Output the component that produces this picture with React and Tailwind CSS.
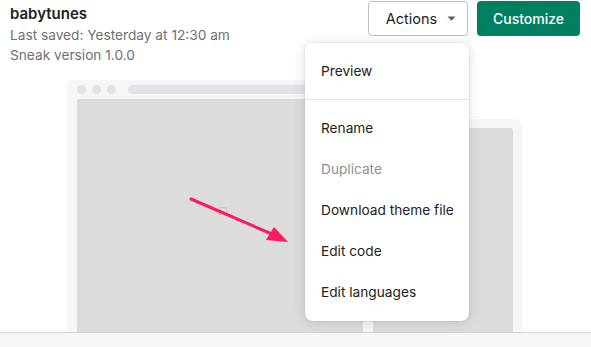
import React from "react";

function MenuItem({ children, muted }) {
  return (
    <div className={`h-[41px] flex items-center px-4 text-[13.7px] whitespace-nowrap ${muted ? "text-[#8c9196]" : "text-[#202223]"}`}>
      {children}
    </div>
  );
}

export default function App() {
  return (
    <div className="relative w-[591px] h-[347px] bg-white overflow-hidden flex flex-col font-['Inter',sans-serif]">

      {/* Header */}
      <div className="flex justify-between items-start pl-[10px] pr-[11px] pt-[1px] h-[80px]">
        <div className="pt-[3px]">
          <div className="text-[15px] leading-5 font-semibold text-[#202223]">babytunes</div>
          <div className="text-[13.7px] leading-5 text-[#6d7175] mt-[1px]">Last saved: Yesterday at 12:30 am</div>
          <div className="text-[13.7px] leading-5 text-[#6d7175]">Sneak version 1.0.0</div>
        </div>
        <div className="flex gap-[9px]">
          <button className="h-[35px] w-[100px] flex items-center justify-center gap-[10px] rounded-[4px] border border-[#babfc3] bg-white text-[14.5px] text-[#202223] pl-[6px]">
            Actions
            <svg width="9" height="5" viewBox="0 0 9 5"><path d="M0.5 0.5h8L4.5 4.8z" fill="#5c5f62" /></svg>
          </button>
          <button className="h-[35px] w-[103px] rounded-[4px] bg-[#008060] text-white text-[14px] font-medium">
            Customize
          </button>
        </div>
      </div>

      {/* Preview */}
      <div className="flex items-end pl-[67px] h-[252px]">
        <div className="w-[313px] h-full bg-[#f4f6f8] rounded-t-[6px] flex flex-col pt-[5px] pl-[10px]">
          <div className="flex items-center gap-[6px] h-[9px] mb-[5px]">
            <span className="w-[9px] h-[9px] rounded-full bg-[#dfe3e8]" />
            <span className="w-[9px] h-[9px] rounded-full bg-[#dfe3e8]" />
            <span className="w-[9px] h-[9px] rounded-full bg-[#dfe3e8]" />
            <span className="flex-1 h-[9px] rounded-full bg-[#dfe3e8] ml-[6px]" />
          </div>
          <div className="flex-1 bg-[#dcdcdc] flex items-center justify-center">
            <span className="w-[8px] h-[8px] border border-[#c8c8c8] mt-[-10px] ml-[-12px]" />
          </div>
        </div>
        <div className="w-[159px] h-[213px] -ml-[17px] bg-[#f4f6f8] rounded-t-[6px] pt-[9px] pl-[10px] pr-[9px] flex flex-col">
          <div className="flex-1 bg-[#dcdcdc] rounded-tr-[3px]" />
        </div>
      </div>

      {/* Bottom bar */}
      <div className="flex-1 border-t border-[#d2d5d8] bg-[#f6f6f7]" />

      {/* Arrow annotation */}
      <svg className="absolute left-0 top-0 pointer-events-none" width="591" height="347">
        <line x1="191" y1="199" x2="274" y2="235" stroke="#ff1a5b" strokeWidth="3" strokeLinecap="round" />
        <path d="M288 242 L266 240 L274 227 Z" fill="#ff1a5b" />
      </svg>

      {/* Actions dropdown */}
      <div className="absolute left-[305px] top-[43px] w-[164px] bg-white rounded-[8px] shadow-[0_0_0_1px_rgba(63,63,68,0.05),0_1px_12px_rgba(63,63,68,0.18)]">
        <div className="py-2">
          <div className="h-[40px] flex items-center px-4 text-[13.7px] text-[#202223]">Preview</div>
        </div>
        <div className="border-t border-[#e1e3e5] py-2">
          <MenuItem>Rename</MenuItem>
          <MenuItem muted>Duplicate</MenuItem>
          <MenuItem>Download theme file</MenuItem>
          <MenuItem>Edit code</MenuItem>
          <MenuItem>Edit languages</MenuItem>
        </div>
      </div>
    </div>
  );
}
